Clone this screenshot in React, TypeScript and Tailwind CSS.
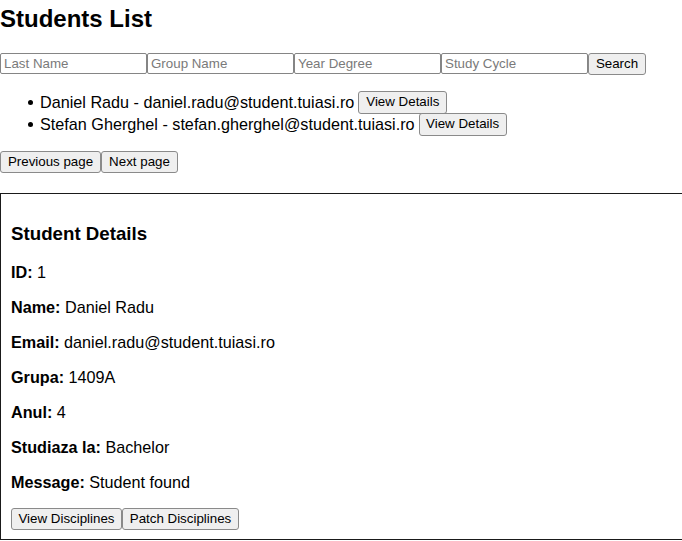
import React from 'react';

const students = [
  { name: 'Daniel Radu', email: 'daniel.radu@student.tuiasi.ro', btn: 'w-[89px]' },
  { name: 'Stefan Gherghel', email: 'stefan.gherghel@student.tuiasi.ro', btn: 'w-[88px]' },
];

const details: [string, string][] = [
  ['ID:', '1'],
  ['Name:', 'Daniel Radu'],
  ['Email:', 'daniel.radu@student.tuiasi.ro'],
  ['Grupa:', '1409A'],
  ['Anul:', '4'],
  ['Studiaza la:', 'Bachelor'],
  ['Message:', 'Student found'],
];

const btn =
  'h-[22px] bg-[#efefef] border border-[#8a8a8a] rounded-[3px] text-[13.33px] leading-none text-black flex items-center justify-center';

const input =
  'h-[21px] w-[147px] border border-[#858585] rounded-[2px] px-[3px] text-[13.33px] text-black placeholder:text-[#7a7a7a] outline-none bg-white';

const App: React.FC = () => {
  return (
    <div className="h-screen w-full bg-white text-black font-['Liberation_Sans',Arial,sans-serif] overflow-hidden">
      <h1 className="mt-[5px] text-[24px] leading-[28px] font-bold">Students List</h1>

      {/* Search filters */}
      <div className="mt-[20px] flex">
        <input className={input} placeholder="Last Name" />
        <input className={input} placeholder="Group Name" />
        <input className={input} placeholder="Year Degree" />
        <input className={input} placeholder="Study Cycle" />
        <button className={`${btn} w-[58px] h-[21px]`}>Search</button>
      </div>

      {/* Students */}
      <ul className="mt-[16px] flex flex-col">
        {students.map((s) => (
          <li key={s.email} className="flex items-center h-[22px] text-[16.2px]">
            <span className="ml-[28px] mr-[7px] w-[5px] h-[5px] rounded-full bg-black" />
            <span>
              {s.name} - {s.email}
            </span>
            <button className={`${btn} ${s.btn} h-[23px] ml-[4px]`}>View Details</button>
          </li>
        ))}
      </ul>

      {/* Pagination */}
      <div className="mt-[16px] flex">
        <button className={`${btn} w-[101px]`}>Previous page</button>
        <button className={`${btn} w-[77px]`}>Next page</button>
      </div>

      {/* Details panel */}
      <div className="mt-[20px] border-y border-l border-[#1a1a1a] px-[10px] pt-[10px] pb-[9px]">
        <h3 className="mt-[19px] text-[18.72px] leading-[22px] font-bold">Student Details</h3>
        <div className="mt-[18px] flex flex-col gap-[16px]">
          {details.map(([k, v]) => (
            <p key={k} className="text-[16.2px] leading-[19px]">
              <b className="font-bold">{k}</b> {v}
            </p>
          ))}
        </div>
        <div className="mt-[16px] flex">
          <button className={`${btn} w-[111px] h-[21px]`}>View Disciplines</button>
          <button className={`${btn} w-[117px] h-[21px]`}>Patch Disciplines</button>
        </div>
      </div>
    </div>
  );
};

export default App;
